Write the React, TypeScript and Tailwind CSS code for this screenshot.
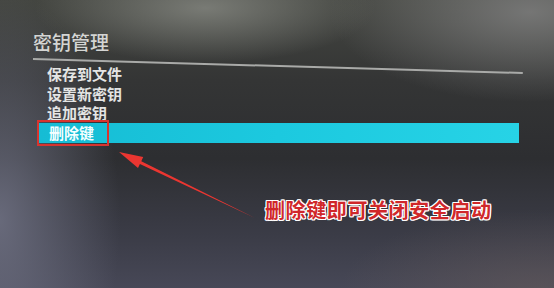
export default function App() {
  const items = ["保存到文件", "设置新密钥", "追加密钥"];
  return (
    <div
      className="relative w-[554px] h-[288px] overflow-hidden bg-[#323335] bg-[radial-gradient(ellipse_170px_55px_at_205px_8px,rgba(130,132,126,0.85),transparent),radial-gradient(ellipse_200px_90px_at_530px_12px,rgba(130,130,130,0.8),transparent),radial-gradient(ellipse_120px_230px_at_0px_220px,rgba(112,114,132,0.85),transparent),radial-gradient(ellipse_200px_80px_at_540px_290px,rgba(100,90,90,0.6),transparent),linear-gradient(180deg,#444641_0%,#343535_28%,#2d2e31_55%,#3b3c47_82%,#474857_100%)]"
      style={{ fontFamily: '"Noto Sans CJK SC", "Noto Sans", sans-serif' }}
    >
      <div className="pl-[33px] pt-[31px]">
        <div className="text-[19px] leading-[21px] font-medium text-[#d4d5d3]">密钥管理</div>
        <div className="mt-[6px] h-[2px] w-[490px] bg-[#a9aaa8] origin-left rotate-[1.64deg]" />
        <div className="mt-[4px] flex flex-col pl-[1px]">
          {items.map((t) => (
            <div key={t} className="h-[19.5px] pl-[13px] text-[15px] leading-[19.5px] font-bold text-[#e4e5e4]">
              {t}
            </div>
          ))}
          <div className="ml-[4px] w-[481px] h-[20px] pl-[11px] text-[15px] leading-[20px] font-bold text-[#f4ffff] bg-[linear-gradient(90deg,#16bcd4,#1cc9df_50%,#27d3e6)]">
            删除键
          </div>
        </div>
      </div>

      <div className="absolute left-[37px] top-[120px] w-[72px] h-[26px] border-2 border-[#d8342f]" />

      <svg className="absolute left-0 top-0" width="554" height="288" viewBox="0 0 554 288">
        <polygon
          points="119,152 143.2,157.1 141.3,161.2 255,218 139.9,163.9 138,168"
          fill="#ea3631"
        />
      </svg>

      <div className="absolute left-[265px] top-[199px] text-[20px] leading-[22px] font-bold tracking-[0.6px] text-[#d0282a] [text-shadow:1px_0_#fff,-1px_0_#fff,0_1px_#fff,0_-1px_#fff,1px_1px_#fff,-1px_-1px_#fff,1px_-1px_#fff,-1px_1px_#fff]">
        删除键即可关闭安全启动
      </div>
    </div>
  );
}
